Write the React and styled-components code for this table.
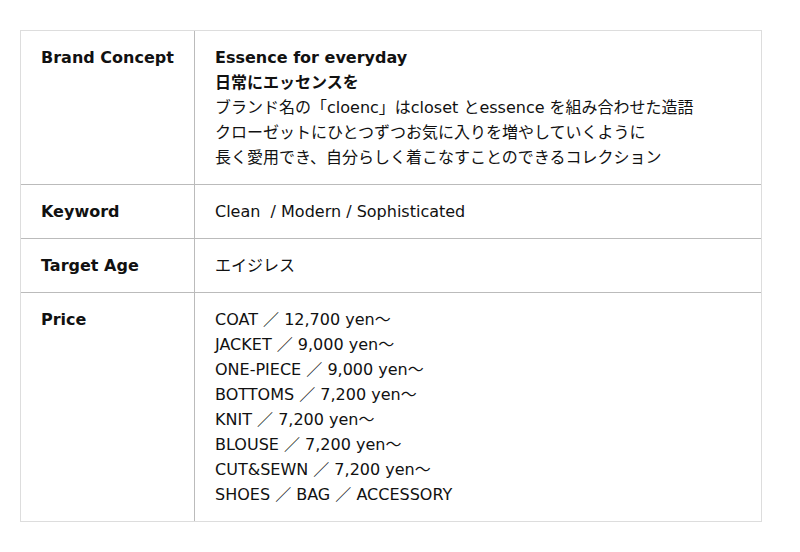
import React from "react";
import styled, { createGlobalStyle } from "styled-components";

const GlobalStyle = createGlobalStyle`
  body {
    margin: 0;
    background: #ffffff;
    font-family: "DejaVu Sans", "Noto Sans CJK JP", sans-serif;
    color: #111111;
  }
`;

const Page = styled.div`
  padding: 30px 38px 30px 20px;
`;

const Table = styled.div`
  display: grid;
  grid-template-columns: 174px 1fr;
  border: 1px solid #dddddd;
`;

const Label = styled.div`
  padding: 14px 20px;
  font-size: 16px;
  line-height: 25px;
  font-weight: bold;
  border-right: 1px solid #bbbbbb;
  border-top: ${(p) => (p.first ? "none" : "1px solid #bbbbbb")};
`;

const Value = styled.div`
  padding: 14px 20px;
  font-size: 16px;
  line-height: 25px;
  border-top: ${(p) => (p.first ? "none" : "1px solid #bbbbbb")};
`;

const Line = styled.div`
  font-weight: ${(p) => (p.bold ? "bold" : "normal")};
  white-space: pre;
`;

const rows = [
  {
    label: "Brand Concept",
    lines: [
      { text: "Essence for everyday", bold: true },
      { text: "日常にエッセンスを", bold: true },
      { text: "ブランド名の「cloenc」はcloset とessence を組み合わせた造語" },
      { text: "クローゼットにひとつずつお気に入りを増やしていくように" },
      { text: "長く愛用でき、自分らしく着こなすことのできるコレクション" },
    ],
  },
  { label: "Keyword", lines: [{ text: "Clean  / Modern / Sophisticated" }] },
  { label: "Target Age", lines: [{ text: "エイジレス" }] },
  {
    label: "Price",
    lines: [
      { text: "COAT ／ 12,700 yen〜" },
      { text: "JACKET ／ 9,000 yen〜" },
      { text: "ONE-PIECE ／ 9,000 yen〜" },
      { text: "BOTTOMS ／ 7,200 yen〜" },
      { text: "KNIT ／ 7,200 yen〜" },
      { text: "BLOUSE ／ 7,200 yen〜" },
      { text: "CUT&SEWN ／ 7,200 yen〜" },
      { text: "SHOES ／ BAG ／ ACCESSORY" },
    ],
  },
];

const App = () => {
  return (
    <Page>
      <GlobalStyle />
      <Table>
        {rows.map((row, i) => (
          <React.Fragment key={row.label}>
            <Label first={i === 0}>{row.label}</Label>
            <Value first={i === 0}>
              {row.lines.map((line) => (
                <Line key={line.text} bold={line.bold}>
                  {line.text}
                </Line>
              ))}
            </Value>
          </React.Fragment>
        ))}
      </Table>
    </Page>
  );
};

export default App;
